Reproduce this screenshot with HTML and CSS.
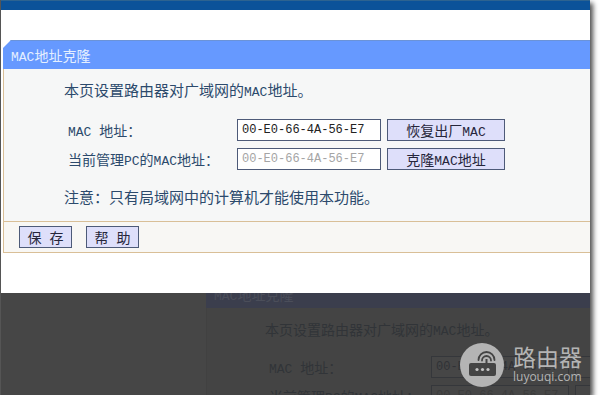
FILE: index.html
```
<!DOCTYPE html>
<html lang="zh-CN">
<head>
  <meta charset="UTF-8" />
  <meta name="viewport" content="width=device-width, initial-scale=1.0"/>
  <title>MAC地址克隆</title>
  <link rel="stylesheet" href="styles.css">
</head>
<body>
  <div class="frame">
    <div class="topbar"></div>

    <form class="panel">
      <h2><span class="latin">MAC</span>地址克隆</h2>
      <div class="content">
        <p>本页设置路由器对广域网的<span class="latin">MAC</span>地址。</p>
        <div class="row">
          <label for="mac"><span class="latin">MAC </span>地址：</label>
          <input type="text" id="mac" value="00-E0-66-4A-56-E7" />
          <button type="button">恢复出厂<span class="latin">MAC</span></button>
        </div>
        <div class="row">
          <label for="pcMac">当前管理<span class="latin">PC</span>的<span class="latin">MAC</span>地址：</label>
          <input type="text" id="pcMac" value="00-E0-66-4A-56-E7" disabled />
          <button type="button">克隆<span class="latin">MAC</span>地址</button>
        </div>
        <p class="note">注意：只有局域网中的计算机才能使用本功能。</p>
      </div>
      <div class="actions">
        <button type="submit">保<span class="latin"> </span>存</button>
        <button type="button">帮<span class="latin"> </span>助</button>
      </div>
    </form>

    <div class="shade">
      <div class="panel faded" aria-hidden="true">
        <h2><span class="latin">MAC</span>地址克隆</h2>
        <div class="content">
          <p>本页设置路由器对广域网的<span class="latin">MAC</span>地址。</p>
          <div class="row">
            <label for="mac2"><span class="latin">MAC </span>地址：</label>
            <input type="text" id="mac2" value="00-E0-66-4A-56-E7" tabindex="-1" />
            <button type="button" tabindex="-1"></button>
          </div>
          <div class="row">
            <label for="pcMac2">当前管理<span class="latin">PC</span>的<span class="latin">MAC</span>地址：</label>
            <input type="text" id="pcMac2" value="00-E0-66-4A-56-E7" disabled />
            <button type="button" tabindex="-1"></button>
          </div>
        </div>
      </div>

      <div class="brand">
        <svg viewBox="0 0 44 44" width="44" height="44">
          <circle cx="22" cy="22" r="22" fill="#b4b4b4"/>
          <rect x="9" y="20" width="27" height="13" rx="2" fill="#444"/>
          <g fill="none" stroke="#444" stroke-width="1.800" stroke-linecap="round">
            <path d="M18.500 17a8 8 0 0 1 16 0"/>
            <path d="M22 17.500a4.500 4.500 0 0 1 9 0"/>
          </g>
          <path d="M26.500 16v5" stroke="#444" stroke-width="2"/>
          <g fill="#c4c4c4">
            <circle cx="17" cy="26.500" r="1.600"/>
            <circle cx="22.500" cy="26.500" r="1.600"/>
            <circle cx="28" cy="26.500" r="1.600"/>
          </g>
        </svg>
        <div>
          <div class="brand-name">路由器</div>
          <div class="brand-url">luyouqi.com</div>
        </div>
      </div>
    </div>
  </div>
</body>
</html>
```
FILE: styles.css
```
* {
  box-sizing: border-box;
}
body {
  margin: 0;
  background: #fff;
  color: #2c4a6c;
  font-family: "Noto Sans CJK SC", sans-serif;
  font-size: 14px;
  line-height: 22px;
}
.frame {
  display: flex;
  flex-direction: column;
  height: calc(100vh - 9px);
  margin-right: 10px;
  border-left: 1px solid #555;
  background: #fff;
  box-shadow: 3px 3px 5px rgba(0,0,0,0.7);
}
.topbar {
  flex: none;
  height: 10px;
  background: #0b5299;
  border-top: 1px solid #2d6390;
}
.panel {
  flex: none;
  margin: 30px 0 0 2px;
}
.panel h2 {
  margin: 0;
  padding: 3px 8px;
  background: #6699ff;
  border-top: 1px solid #6b93d8;
  color: #e4efff;
  font-size: 14px;
  font-weight: normal;
  line-height: 22px;
  clip-path: polygon(0 8px, 8px 0, 100% 0, 100% 100%, 0 100%);
}
.latin {
  font-family: "Liberation Mono", monospace;
  font-size: 13px;
  line-height: 12px;
  white-space: pre;
}
.content {
  padding: 10px 0 13px 60px;
  background: #f6f7f7;
  border-left: 1px solid #d9bf97;
}
.content p {
  margin: 0 0 18px;
  font-size: 15px;
}
.content .note {
  margin: 16px 0 0;
}
.row {
  display: flex;
  margin-bottom: 7px;
  padding-left: 4px;
}
.row label {
  flex: none;
  width: 169px;
}
.row input {
  flex: none;
  width: 144px;
  height: 22px;
  padding: 0 4px;
  border: 1px solid #4d5a78;
  background: #fff;
  color: #222;
  font-family: "Liberation Mono", monospace;
  font-size: 12px;
}
.row input:disabled {
  color: #a5a5a5;
}
button {
  height: 22px;
  padding: 0;
  border: 1px solid #4d5a78;
  background: #dedffa;
  color: #26263a;
  font-family: inherit;
  font-size: 14px;
  line-height: 20px;
}
.row button {
  flex: none;
  width: 118px;
  margin-left: 6px;
}
.actions {
  display: flex;
  gap: 14px;
  padding: 4px 15px;
  background: #f8f7f4;
  border: 1px solid #d9bf97;
  border-right: 0;
}
.actions button {
  width: 53px;
}
.shade {
  position: relative;
  flex: 1;
  min-height: 0;
  margin-top: 40px;
  overflow: hidden;
  background: #464646;
}
.faded {
  margin: -14px 0 0 205px;
  color: #313438;
}
.faded h2 {
  background: #3b3e4d;
  border-color: #3b3e4d;
  color: #4b4e5a;
}
.faded .content {
  padding-left: 58px;
  background: #444;
  border-color: #414141;
}
.faded .content p {
  margin-bottom: 16px;
  font-size: 14px;
}
.faded .row label {
  width: 162px;
}
.faded .row input {
  width: 138px;
}
.faded .row input,
.faded .row button {
  background: #464646;
  border-color: #35373b;
  color: #303236;
}
.faded .row input:disabled {
  color: #3c3c3c;
}
.brand {
  position: absolute;
  right: 8px;
  bottom: 8px;
  display: flex;
  gap: 9px;
  color: #b4b4b4;
}
.brand-name {
  font-size: 23px;
  line-height: 26px;
}
.brand-url {
  font-family: "Open Sans", sans-serif;
  font-size: 12px;
  line-height: 16px;
}
```
